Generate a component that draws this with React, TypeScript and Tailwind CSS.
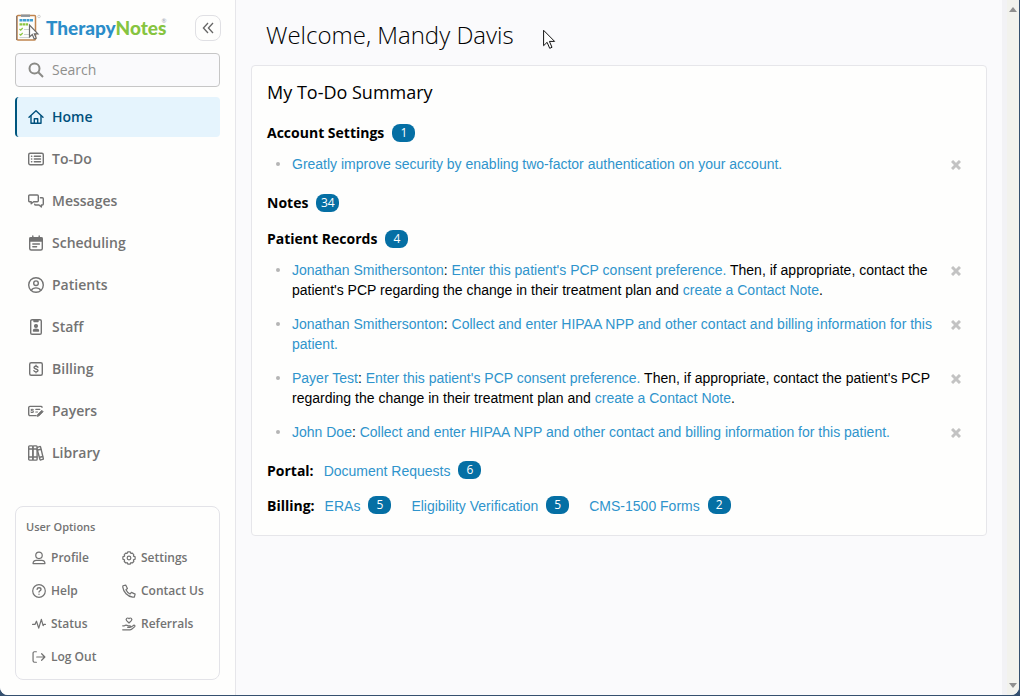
import React from 'react';

type IconProps = { children: React.ReactNode; size?: number };

const Icon: React.FC<IconProps> = ({ children, size = 16 }) => (
  <svg
    width={size}
    height={size}
    viewBox="0 0 16 16"
    fill="none"
    stroke="currentColor"
    strokeWidth={1.4}
    strokeLinecap="round"
    strokeLinejoin="round"
    className="shrink-0"
    aria-hidden="true"
  >
    {children}
  </svg>
);

const icons = {
  home: (
    <>
      <path d="M1 8.3 8 1.8l7 6.5" />
      <path d="M3 7v7.3h10V7" />
      <path d="M6.3 14V9.8h3.4V14" />
    </>
  ),
  todo: (
    <>
      <rect x="0.7" y="2.2" width="14.6" height="11.6" rx="1.5" />
      <path d="M3.5 5.3h.3M3.5 8h.3M3.5 10.7h.3M6.3 5.3h6.2M6.3 8h6.2M6.3 10.7h6.2" />
    </>
  ),
  messages: (
    <>
      <path d="M1.7 2h7.6a1 1 0 0 1 1 1v4.8a1 1 0 0 1-1 1H5.6L3.2 10.7V8.8H1.7a1 1 0 0 1-1-1V3a1 1 0 0 1 1-1z" />
      <path d="M12.4 4.8h1.9a1 1 0 0 1 1 1v5.2a1 1 0 0 1-1 1h-.9v2l-2.4-2H7.7a1 1 0 0 1-1-.9" />
    </>
  ),
  scheduling: (
    <>
      <rect x="1.7" y="2.7" width="12.6" height="12.3" rx="1.5" />
      <path d="M2 3h12v3H2z" fill="currentColor" />
      <path d="M4.8 1v2M11.2 1v2M4.8 9h6.6M4.8 11.8h3.8" />
    </>
  ),
  patients: (
    <>
      <circle cx="8" cy="8" r="7.3" />
      <circle cx="8" cy="6.2" r="2.3" />
      <path d="M3.4 13.3c.8-1.6 2.3-2.4 4.6-2.4s3.8.8 4.6 2.4" />
    </>
  ),
  staff: (
    <>
      <rect x="2.7" y="0.7" width="10.6" height="14.6" rx="1.4" />
      <path d="M6 1.5h4v1H6z" fill="currentColor" />
      <circle cx="8" cy="7" r="1.4" fill="currentColor" />
      <path d="M5.5 12c0-1.3.9-1.7 2.5-1.7s2.5.4 2.5 1.7z" fill="currentColor" />
    </>
  ),
  billing: (
    <>
      <rect x="1.7" y="1.7" width="12.6" height="12.6" rx="1.5" />
      <path d="M10 6.2C9.8 5.5 9 5.2 8 5.2s-2 .4-2 1.3C6 8.4 10 7.5 10 9.5c0 .9-.9 1.4-2 1.4s-1.9-.4-2.1-1.2M8 4.3v.9M8 10.900v.9" />
    </>
  ),
  payers: (
    <>
      <path d="M8.2 12.6H2a1.3 1.3 0 0 1-1.3-1.3V4.7A1.3 1.3 0 0 1 2 3.4h11a1.2 1.2 0 0 1 1.1.8" />
      <path d="M5.3 6.7c-.2-.4-.6-.5-1.1-.5-.6 0-1.1.2-1.1.7 0 1.1 2.3.6 2.3 1.8 0 .6-.6.8-1.2.8s-1-.2-1.2-.6M7.8 6.4h4M7.8 9h1.7" strokeWidth="1.1" />
      <path d="m9.3 13.3.5-2 4-4 1.4 1.4-4 4z" fill="currentColor" strokeWidth="0.8" />
    </>
  ),
  library: (
    <>
      <rect x="0.7" y="0.9" width="4.2" height="14.2" rx="0.9" />
      <rect x="4.9" y="0.9" width="4.2" height="14.2" rx="0.9" />
      <path d="M.9 4h8M.9 12h8" />
      <path d="m9.4 2.3 2.2-.7a.8.8 0 0 1 1 .5l2.7 11.3a.8.8 0 0 1-.6 1l-1.8.5a.8.8 0 0 1-1-.6L9.2 4.5M9.9 5l3.4-.9M11.8 12.3l3.2-.8" />
    </>
  ),
  profile: (
    <>
      <circle cx="8" cy="4.9" r="3.7" />
      <path d="M1.2 14.4c0-2.3 1.4-3.7 3.7-3.7h6.2c2.3 0 3.7 1.4 3.7 3.7z" />
    </>
  ),
  settings: (
    <>
      <circle cx="8" cy="8" r="2.1" />
      <path d="m6.5 1-.6 1.7-1.7-.3-1.6 1.7.4 1.7L1 6.6v2.8l1.900.8-.3 1.800 1.700 1.700 1.700-.4.8 1.700h2.500l.8-1.700 1.700.4 1.700-1.700-.4-1.800L15 9.400V6.600l-1.900-.8.3-1.700-1.600-1.700-1.700.3L9.500 1z" />
    </>
  ),
  help: (
    <>
      <circle cx="8" cy="8" r="7.2" />
      <path d="M5.8 6.1c.1-1.2 1-1.8 2.2-1.8s2.3.6 2.3 1.9S8 7.8 8 9.2M8 11.6v.2" strokeWidth="1.5" />
    </>
  ),
  contact: (
    <path d="m4.2 1.2 2 3.9-1.7 1.5c.9 2 2.5 3.7 4.7 4.8l1.6-1.8 4.2 2-.9 3.3c-.7.2-1.3.2-2 .1C6.4 14.2 1.6 9.3.9 3.5c0-.6 0-1 .2-1.5z" />
  ),
  status: <path d="M.7 8.500h2.700l1.700-3.700 2.600 7.900 3-10 2 7.100 1-1.300h1.600" />,
  referrals: (
    <>
      <path d="M8 6.8 5.3 4.2C3.7 2.5 6.2-.2 8 1.9c1.8-2.1 4.3.6 2.7 2.3z" />
      <path d="M.8 10.1h1.8c1.2-1.1 2.9-1.1 4.2 0h2.1c1.2 0 1.2 1.8 0 1.8H6.6M9.8 11.6l3.3-2c1.3-.7 2.3.7 1.2 1.7L11 13.9c-.6.5-1.2.7-2 .7H.8" />
    </>
  ),
  logout: (
    <>
      <path d="M5 2H2.8A1.6 1.6 0 0 0 1.2 3.6v8.8A1.6 1.6 0 0 0 2.8 14H5" />
      <path d="M5.4 8h9.3M11 4.3 14.7 8 11 11.7" />
    </>
  ),
};

const navItems = [
  { label: 'Home', icon: icons.home, active: true },
  { label: 'To-Do', icon: icons.todo },
  { label: 'Messages', icon: icons.messages },
  { label: 'Scheduling', icon: icons.scheduling },
  { label: 'Patients', icon: icons.patients },
  { label: 'Staff', icon: icons.staff },
  { label: 'Billing', icon: icons.billing },
  { label: 'Payers', icon: icons.payers },
  { label: 'Library', icon: icons.library },
];

const userOptions = [
  { label: 'Profile', icon: icons.profile },
  { label: 'Settings', icon: icons.settings },
  { label: 'Help', icon: icons.help },
  { label: 'Contact Us', icon: icons.contact },
  { label: 'Status', icon: icons.status },
  { label: 'Referrals', icon: icons.referrals },
  { label: 'Log Out', icon: icons.logout },
];

const Logo: React.FC = () => (
  <a href="#" className="flex items-center gap-[5px]" aria-label="TherapyNotes">
    <svg width="26" height="28" viewBox="0 0 26 28" aria-hidden="true">
      <rect x="2" y="1.5" width="18.5" height="24.5" rx="1" fill="#fdfdfb" stroke="#c0854f" strokeWidth="1.5" />
      <path d="M1.5 2v24" stroke="#8b7a70" strokeWidth="1" />
      <path d="M6 .5h9v2.400H6z" fill="#8e9499" />
      <path d="M4.500 6.300h13.500" stroke="#3f9fd3" strokeWidth="2.400" strokeDasharray="3 .5" />
      <path d="M4.500 10.300h9" stroke="#8cc63f" strokeWidth="2.200" strokeDasharray="2.500 .5" />
      <path d="m4.500 15 1.200 1.200L7.700 14M4.500 20l1.200 1.200L7.700 19" fill="none" stroke="#8cc63f" strokeWidth="1.200" />
      <path d="M9 15.500h5M9 20.500h5M4.500 23.500h10" stroke="#ccd3d2" strokeWidth="1.200" />
      <path d="M14.500 11v12l2.800-2.500 1.900 4.500 2-.9-1.900-4.300h3.600z" fill="#fff" stroke="#6b6b6b" strokeWidth="1.200" />
      <circle cx="24" cy="2.500" r="1.300" fill="none" stroke="#c8c8c8" strokeWidth=".8" />
    </svg>
    <span className="relative font-['Lato',sans-serif] text-[19px] font-black leading-7 text-[#2b8dc9]">
      Therapy<span className="text-[#86c440]">Notes</span>
      <span className="absolute right-0 top-1 text-[6px] font-normal leading-none text-gray-400">®</span>
    </span>
  </a>
);

const Sidebar: React.FC = () => (
  <aside className="flex w-[236px] shrink-0 flex-col border-r border-[#e6e6ea] bg-[#fefefd] px-[15px] pb-[15px] pt-3">
    <div className="flex h-8 items-center justify-between">
      <Logo />
      <button
        aria-label="Collapse menu"
        className="-mr-px flex size-[26px] items-center justify-center rounded-lg border border-[#e0e0e4] text-[#666]"
      >
        <svg width="12" height="12" viewBox="0 0 12 12" fill="none" stroke="currentColor" strokeWidth="1.3">
          <path d="M6 1 1.400 6 6 11M11 1 6.400 6 11 11" />
        </svg>
      </button>
    </div>

    {/* Search */}
    <label className="mt-[9px] flex h-[34px] items-center gap-2 rounded border border-[#c6c6c6] bg-[#fafafc] px-3 text-[#8a8a86]">
      <svg width="16" height="16" viewBox="0 0 16 16" fill="none" stroke="currentColor" strokeWidth="2" className="shrink-0">
        <circle cx="6.5" cy="6.5" r="5" />
        <path d="m10.300 10.300 4.700 4.700" />
      </svg>
      <input
        type="text"
        aria-label="Search"
        placeholder="Search"
        className="w-full bg-transparent pb-0.5 text-[14px] outline-none placeholder:text-[#8f8f8c]"
      />
    </label>

    <nav className="mt-[10px] flex flex-col gap-0.5">
      {navItems.map((item) => (
        <a
          key={item.label}
          href="#"
          className={`flex h-10 items-center gap-2 border-l-2 pl-[11px] text-[14px] font-semibold ${
            item.active
              ? 'rounded-sm border-[#00567e] bg-[#e5f4fd] text-[#00507c]'
              : 'border-transparent text-[#737373]'
          }`}
        >
          <Icon>{item.icon}</Icon>
          <span className="pb-0.5">{item.label}</span>
        </a>
      ))}
    </nav>

    {/* User options */}
    <section className="mt-auto rounded-lg border border-[#e3e3e8] px-2.5 pb-1.5 pt-3 text-[#737373]">
      <h2 className="text-[11px] font-semibold leading-4">User Options</h2>
      <div className="mt-1.5 grid grid-cols-[90px_1fr] pl-1.5">
        {userOptions.map((item) => (
          <a key={item.label} href="#" className="flex h-[33px] items-center gap-[5px] whitespace-nowrap text-[12px] font-semibold">
            <Icon size={14}>{item.icon}</Icon>
            {item.label}
          </a>
        ))}
      </div>
    </section>
  </aside>
);

const Badge: React.FC<{ count: number }> = ({ count }) => (
  <span className="inline-flex h-[18px] w-[23px] items-center justify-center rounded-lg bg-[#056fa4] font-['Open_Sans',sans-serif] text-[12px] font-medium text-white">
    {count}
  </span>
);

const SectionTitle: React.FC<{ title: string; count: number }> = ({ title, count }) => (
  <div className="flex h-6 items-center gap-2 text-[14px]">
    <h3 className="pb-0.5 font-bold">{title}</h3>
    <Badge count={count} />
  </div>
);

const TextLink: React.FC<{ children: React.ReactNode }> = ({ children }) => (
  <a href="#" className="text-[#2f94cc]">
    {children}
  </a>
);

const TodoItem: React.FC<{ children: React.ReactNode }> = ({ children }) => (
  <li className="flex items-start font-['Liberation_Sans',Arial,sans-serif] text-[14px] leading-5">
    <span className="ml-[9px] mr-3 mt-2 size-1 shrink-0 rounded-full bg-[#b5b5b5]" />
    <p className="flex-1">{children}</p>
    <button aria-label="Dismiss" className="ml-4 mr-2.5 mt-1.5 text-[#c3c3c3]">
      <svg width="10" height="10" viewBox="0 0 10 10" stroke="currentColor" strokeWidth="3">
        <path d="m1 1 8 8M9 1 1 9" />
      </svg>
    </button>
  </li>
);

const LinkCount: React.FC<{ label: string; count: number }> = ({ label, count }) => (
  <span className="flex items-start gap-2 font-['Liberation_Sans',Arial,sans-serif] leading-5">
    <TextLink>{label}</TextLink>
    <Badge count={count} />
  </span>
);

const pcpNote = "Enter this patient's PCP consent preference.";

const TodoSummary: React.FC = () => (
  <section className="mt-3.5 rounded border border-[#e6e6ea] bg-[#fefefd] px-[15px] pb-[17px] pt-3.5">
    <h2 className="text-[18px] leading-6">My To-Do Summary</h2>

    <div className="mt-[17px]">
      <SectionTitle title="Account Settings" count={1} />
      <ul className="mb-[17px] mt-[9px]">
        <TodoItem>
          <TextLink>Greatly improve security by enabling two-factor authentication on your account.</TextLink>
        </TodoItem>
      </ul>
    </div>

    <SectionTitle title="Notes" count={34} />

    <div className="mt-3">
      <SectionTitle title="Patient Records" count={4} />
      <ul className="mb-[17px] mt-[9px] flex flex-col gap-3.5">
        <TodoItem>
          <TextLink>Jonathan Smithersonton</TextLink>: <TextLink>{pcpNote}</TextLink> Then, if appropriate, contact the
          patient's PCP regarding the change in their treatment plan and <TextLink>create a Contact Note</TextLink>.
        </TodoItem>
        <TodoItem>
          <TextLink>Jonathan Smithersonton</TextLink>:{' '}
          <TextLink>Collect and enter HIPAA NPP and other contact and billing information for this patient.</TextLink>
        </TodoItem>
        <TodoItem>
          <TextLink>Payer Test</TextLink>: <TextLink>{pcpNote}</TextLink> Then, if appropriate, contact the patient's PCP
          regarding the change in their treatment plan and <TextLink>create a Contact Note</TextLink>.
        </TodoItem>
        <TodoItem>
          <TextLink>John Doe</TextLink>:{' '}
          <TextLink>Collect and enter HIPAA NPP and other contact and billing information for this patient.</TextLink>
        </TodoItem>
      </ul>
    </div>

    <div className="flex h-6 items-center text-[14px]">
      <h3 className="mr-2.5 pb-0.5 font-bold">Portal:</h3>
      <LinkCount label="Document Requests" count={6} />
    </div>
    <div className="mt-[11px] flex h-6 items-center text-[14px]">
      <h3 className="mr-2.5 pb-0.5 font-bold">Billing:</h3>
      <div className="flex gap-5">
        <LinkCount label="ERAs" count={5} />
        <LinkCount label="Eligibility Verification" count={5} />
        <LinkCount label="CMS-1500 Forms" count={2} />
      </div>
    </div>
  </section>
);

const App: React.FC = () => {
  return (
    <div className="h-screen bg-[#35506f] pb-px pr-px font-['Open_Sans',sans-serif] text-black">
      <div className="flex h-full overflow-hidden rounded-b-lg bg-[#fafafc]">
        <Sidebar />

        <main className="min-w-0 flex-1 px-[15px] pt-[19px]">
          <h1 className="pl-[15px] text-[24px] font-light leading-8">Welcome, Mandy Davis</h1>
          <TodoSummary />
        </main>

        {/* Scroll track */}
        <div className="flex w-[17px] shrink-0 flex-col items-center justify-between border-l-[5px] border-[#f2f2f5] bg-[#f2f2ed] py-[7px] text-[#8f8f8f]">
          <svg width="8" height="5" viewBox="0 0 8 5" fill="currentColor">
            <path d="M4 0 8 5H0z" />
          </svg>
          <svg width="8" height="5" viewBox="0 0 8 5" fill="currentColor">
            <path d="M0 0h8L4 5z" />
          </svg>
        </div>
      </div>

      {/* Mouse pointer */}
      <svg className="absolute left-[543px] top-[29px]" width="13" height="21" viewBox="0 0 13 21" aria-hidden="true">
        <path d="M.6 1.300v15.400l3.500-3.400 2.600 6 2.300-1-2.600-5.900h5.200z" fill="#fff" stroke="#111" strokeWidth="1" />
      </svg>
    </div>
  );
};

export default App;
